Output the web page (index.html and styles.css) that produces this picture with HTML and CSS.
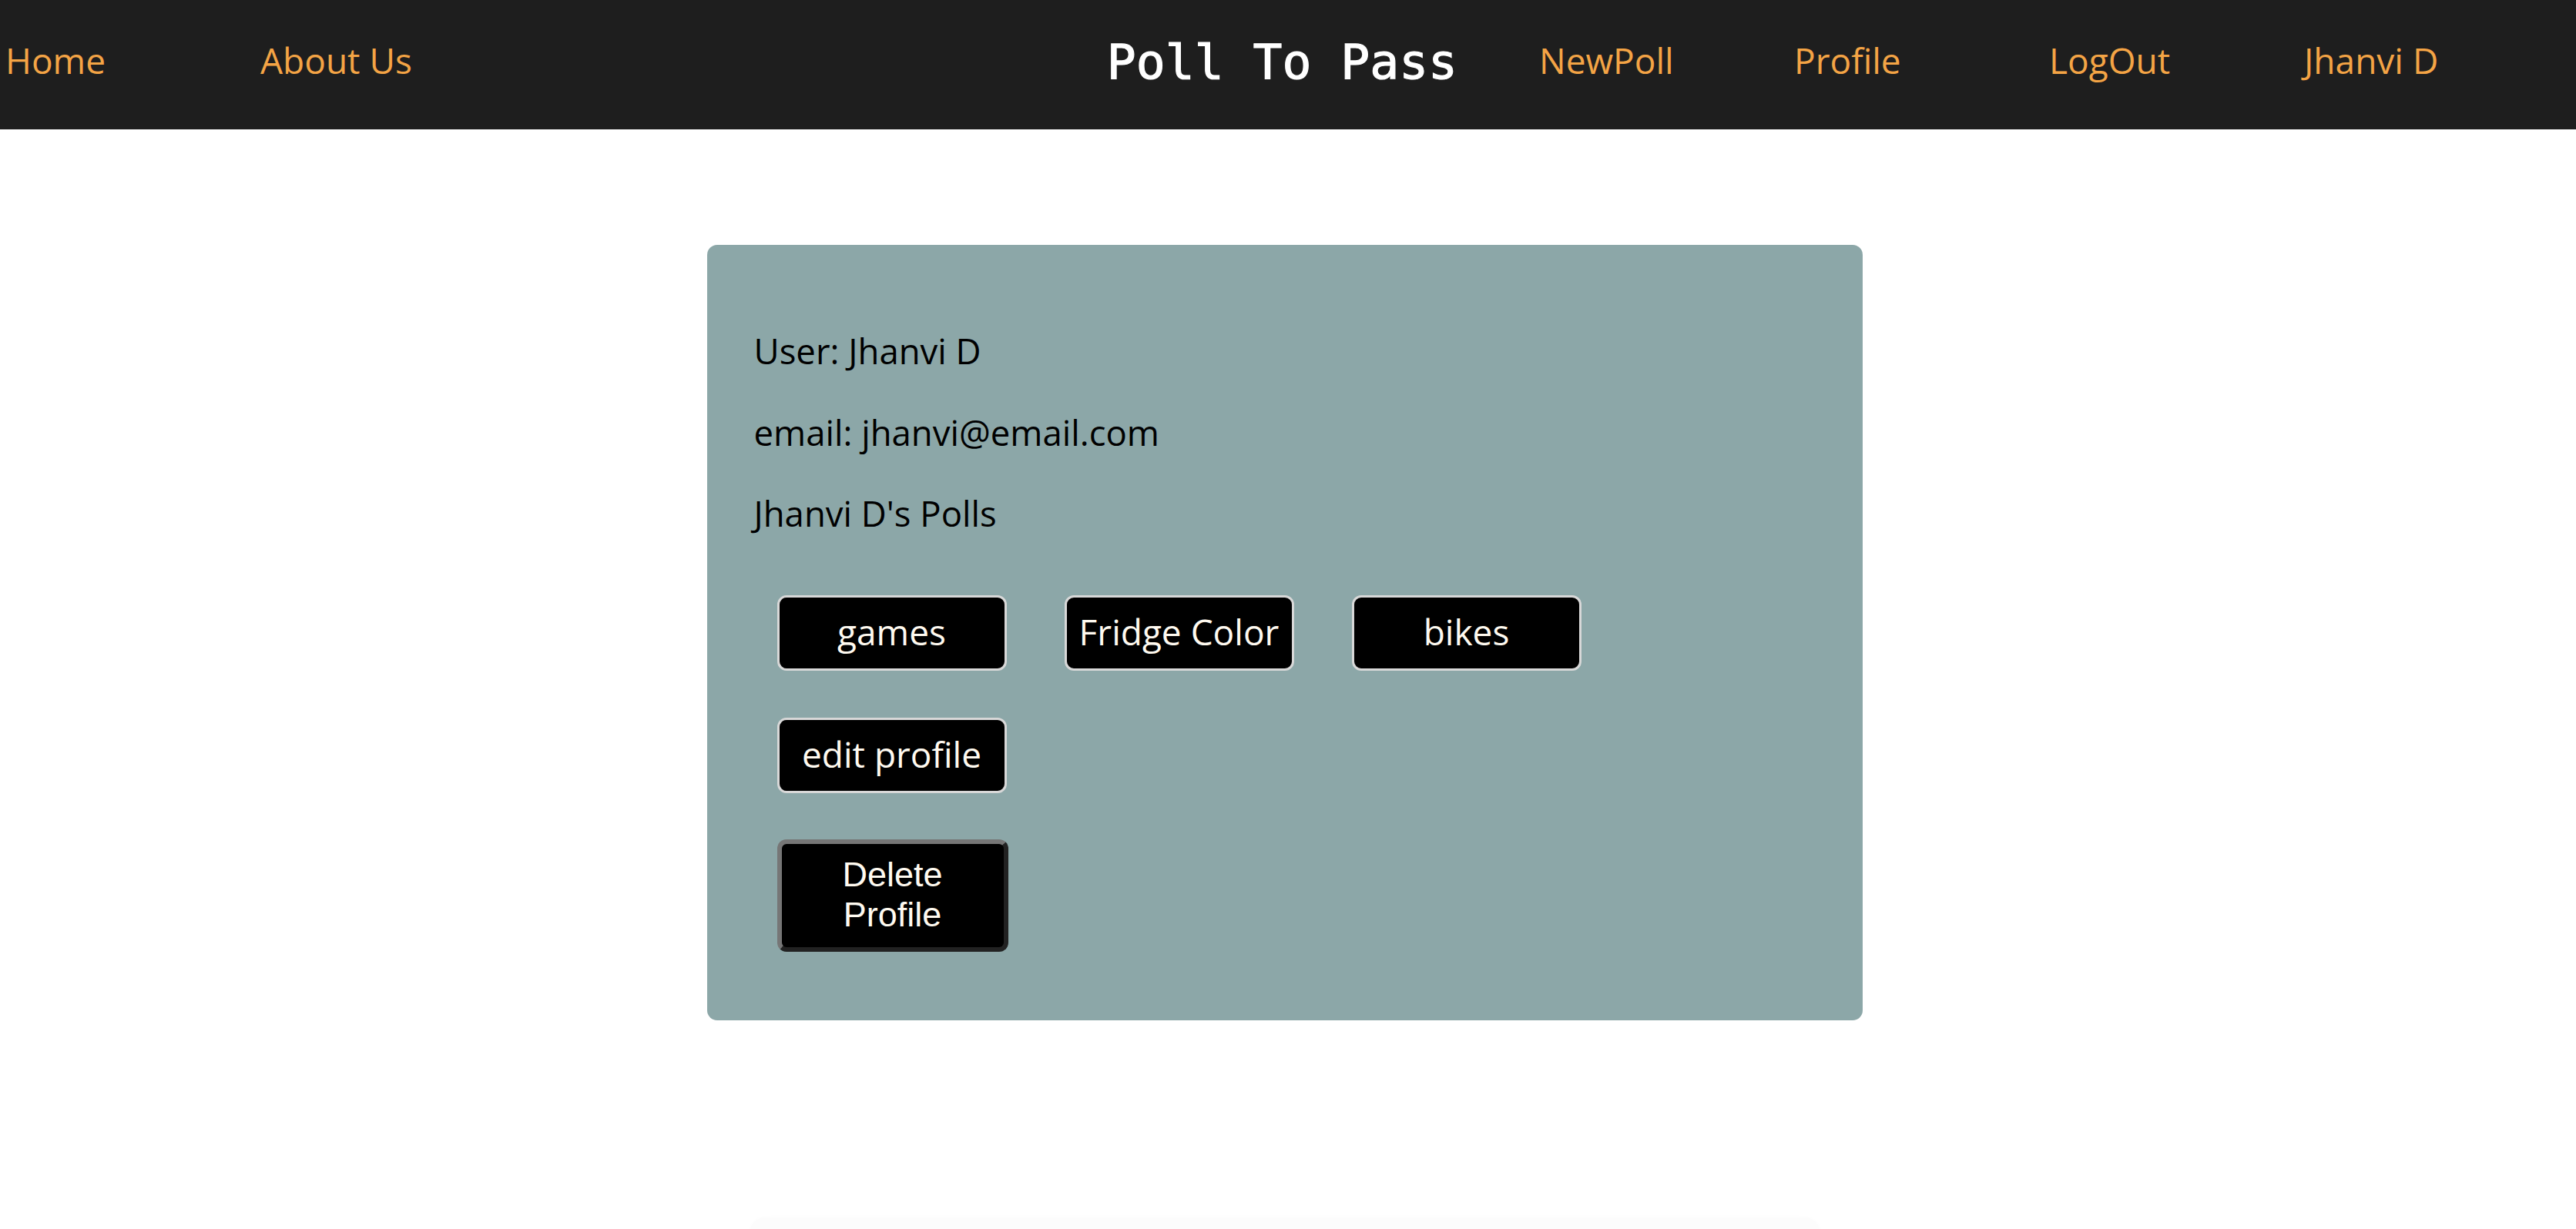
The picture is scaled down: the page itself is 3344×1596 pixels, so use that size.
FILE: index.html
```html
<!DOCTYPE html>
<html lang="en">
<head>
<meta charset="utf-8">
<title>Poll To Pass</title>
<link rel="stylesheet" href="styles.css">
</head>
<body>
<nav class="nav">
  <a class="nav-link" href="#">Home</a>
  <a class="nav-link" href="#">About Us</a>
  <div class="nav-spacer"></div>
  <h1 class="brand">Poll To Pass</h1>
  <a class="nav-link" href="#">NewPoll</a>
  <a class="nav-link" href="#">Profile</a>
  <a class="nav-link" href="#">LogOut</a>
  <a class="nav-link" href="#">Jhanvi D</a>
</nav>
<main class="page">
  <section class="card">
    <p class="info">User: Jhanvi D</p>
    <p class="info">email: jhanvi@email.com</p>
    <p class="info">Jhanvi D's Polls</p>
    <div class="polls">
      <button class="btn">games</button>
      <button class="btn">Fridge Color</button>
      <button class="btn">bikes</button>
    </div>
    <div class="actions">
      <button class="btn">edit profile</button>
      <button class="btn-delete">Delete Profile</button>
    </div>
  </section>
  <div class="ghost"></div>
</main>
</body>
</html>
```
FILE: styles.css
```css
html, body {
  margin: 0;
  padding: 0;
  background: #ffffff;
}
body {
  font-family: "Open Sans", "Noto Sans", sans-serif;
  overflow: hidden;
}
.nav {
  display: flex;
  align-items: center;
  height: 168px;
  background: #1e1e1e;
  padding: 0 22px 0 7px;
  box-sizing: border-box;
}
.nav-link {
  width: 331px;
  flex: none;
  color: #f4a445;
  text-decoration: none;
  font-size: 46px;
  line-height: 62px;
  margin-bottom: 12px;
}
.nav-spacer {
  flex: 1;
}
.brand {
  margin: 0 106px 0 0;
  font-family: "DejaVu Sans Mono", "Liberation Mono", monospace;
  font-weight: normal;
  font-size: 63px;
  line-height: 80px;
  color: #ffffff;
  -webkit-text-stroke: 1.2px #ffffff;
  position: relative;
  top: -3px;
}
.page {
  display: flex;
  flex-direction: column;
  align-items: center;
}
.card {
  width: 1500px;
  box-sizing: border-box;
  margin-top: 150px;
  margin-right: 9px;
  background: #8ca7a8;
  border-radius: 13px;
  padding: 106px 57px 89px 61px;
  display: flex;
  flex-direction: column;
  align-items: flex-start;
}
.info {
  margin: 0;
  font-size: 45.5px;
  line-height: 62.5px;
  color: #000000;
}
.info + .info {
  margin-top: 43px;
}
.polls {
  display: flex;
  gap: 75px;
  margin-top: 75px;
  padding-left: 30px;
}
.actions {
  display: flex;
  flex-direction: column;
  align-items: flex-start;
  gap: 60px;
  margin-top: 61px;
  padding-left: 30px;
}
.btn {
  width: 298px;
  height: 98px;
  box-sizing: border-box;
  background: #000000;
  color: #fffaf0;
  border: 3px solid #d8d8d8;
  border-radius: 12px;
  font-family: "Open Sans", "Noto Sans", sans-serif;
  font-size: 46px;
  line-height: 62px;
  padding: 0 10px 4px;
  cursor: pointer;
}
.btn-delete {
  width: 300px;
  height: 146px;
  box-sizing: border-box;
  background: #000000;
  color: #fffaf0;
  border-width: 6px;
  border-style: solid;
  border-color: #767676 #222222 #222222 #767676;
  border-radius: 12px;
  font-family: "Liberation Sans", Arial, sans-serif;
  font-size: 45px;
  line-height: 52px;
  padding: 0 24px 2px;
  cursor: pointer;
}
.ghost {
  width: 1390px;
  height: 60px;
  margin-top: 256px;
  margin-right: 9px;
  background: #fcfcfc;
  border-radius: 20px;
  box-shadow: 0 0 12px #fdfdfd;
}
```
